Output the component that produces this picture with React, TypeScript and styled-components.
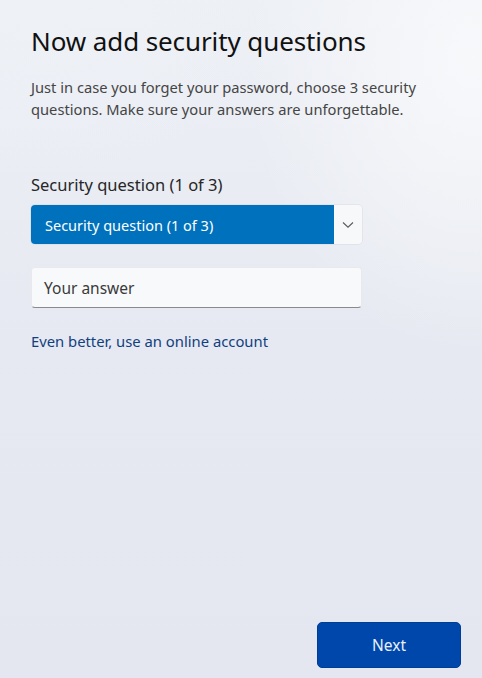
import React from 'react';
import styled, { createGlobalStyle } from 'styled-components';

const GlobalStyle = createGlobalStyle`
	html, body {
		margin: 0;
		padding: 0;
	}
	body {
		font-family: 'Noto Sans', 'Open Sans', sans-serif;
	}
`;

const Page = styled.div`
	box-sizing: border-box;
	width: 482px;
	height: 678px;
	overflow: hidden;
	display: flex;
	flex-direction: column;
	padding: 24px 21px 10px 31px;
	background:
		radial-gradient(ellipse 320px 420px at 470px 60px, rgba(248, 249, 251, 0.95), rgba(248, 249, 251, 0) 70%),
		radial-gradient(ellipse 300px 220px at 40px 0px, rgba(238, 241, 246, 0.9), rgba(238, 241, 246, 0) 80%),
		linear-gradient(180deg, #edf0f5 0%, #e6e9f1 50%, #e4e7ef 100%);
	color: #1a1a1a;
`;

const Title = styled.h1`
	margin: 0;
	font-size: 26px;
	font-weight: 400;
	letter-spacing: -0.1px;
	color: #111;
	line-height: 35px;
`;

const Description = styled.p`
	margin: 17px 0 0;
	max-width: 420px;
	font-size: 14.7px;
	line-height: 22px;
	color: #454545;
`;

const Field = styled.div`
	display: flex;
	flex-direction: column;
	width: 331px;
	margin-top: 53px;
`;

const Label = styled.label`
	font-size: 16.5px;
	line-height: 24px;
	color: #262626;
	margin-bottom: 8px;
`;

const Select = styled.div`
	display: flex;
	height: 39px;
	border-radius: 4px;
	overflow: hidden;
	background: #f7f8fa;
	box-shadow: 0 0 0 1px rgba(0, 0, 0, 0.04);
`;

const SelectValue = styled.div`
	flex: 1;
	display: flex;
	align-items: center;
	padding-left: 14px;
	background: #0071bc;
	color: #fff;
	font-size: 14.5px;
`;

const Chevron = styled.div`
	width: 28px;
	display: flex;
	align-items: center;
	justify-content: center;
	color: #5a5a5a;
`;

const AnswerInput = styled.div`
	box-sizing: border-box;
	display: flex;
	align-items: center;
	height: 41px;
	margin-top: 23px;
	padding-left: 12px;
	border-radius: 4px;
	background: #f8f9fa;
	border: 1px solid #e8e9ec;
	border-bottom: 1px solid #8a8a8a;
	color: #3a3a3a;
	font-size: 15.5px;
`;

const Link = styled.a`
	margin-top: 23px;
	font-size: 14.8px;
	color: #11407f;
	text-decoration: none;
	cursor: pointer;
`;

const Footer = styled.div`
	margin-top: auto;
	display: flex;
	justify-content: flex-end;
`;

const PrimaryButton = styled.button`
	width: 144px;
	height: 46px;
	border: 1px solid #003d97;
	border-radius: 5px;
	background: #0047ab;
	color: #e9f0fb;
	font-family: inherit;
	font-size: 15.5px;
	cursor: pointer;
`;

const App = () => {
	return (
		<>
			<GlobalStyle />
			<Page>
				<Title>Now add security questions</Title>
				<Description>
					Just in case you forget your password, choose 3 security questions. Make sure your answers are unforgettable.
				</Description>
				<Field>
					<Label>Security question (1 of 3)</Label>
					<Select>
						<SelectValue>Security question (1 of 3)</SelectValue>
						<Chevron>
							<svg width="12" height="8" viewBox="0 0 12 8" fill="none">
								<path d="M1 1.5 L6 6.2 L11 1.5" stroke="currentColor" strokeWidth="1.1" />
							</svg>
						</Chevron>
					</Select>
					<AnswerInput>Your answer</AnswerInput>
					<Link>Even better, use an online account</Link>
				</Field>
				<Footer>
					<PrimaryButton>Next</PrimaryButton>
				</Footer>
			</Page>
		</>
	);
};

export default App;
